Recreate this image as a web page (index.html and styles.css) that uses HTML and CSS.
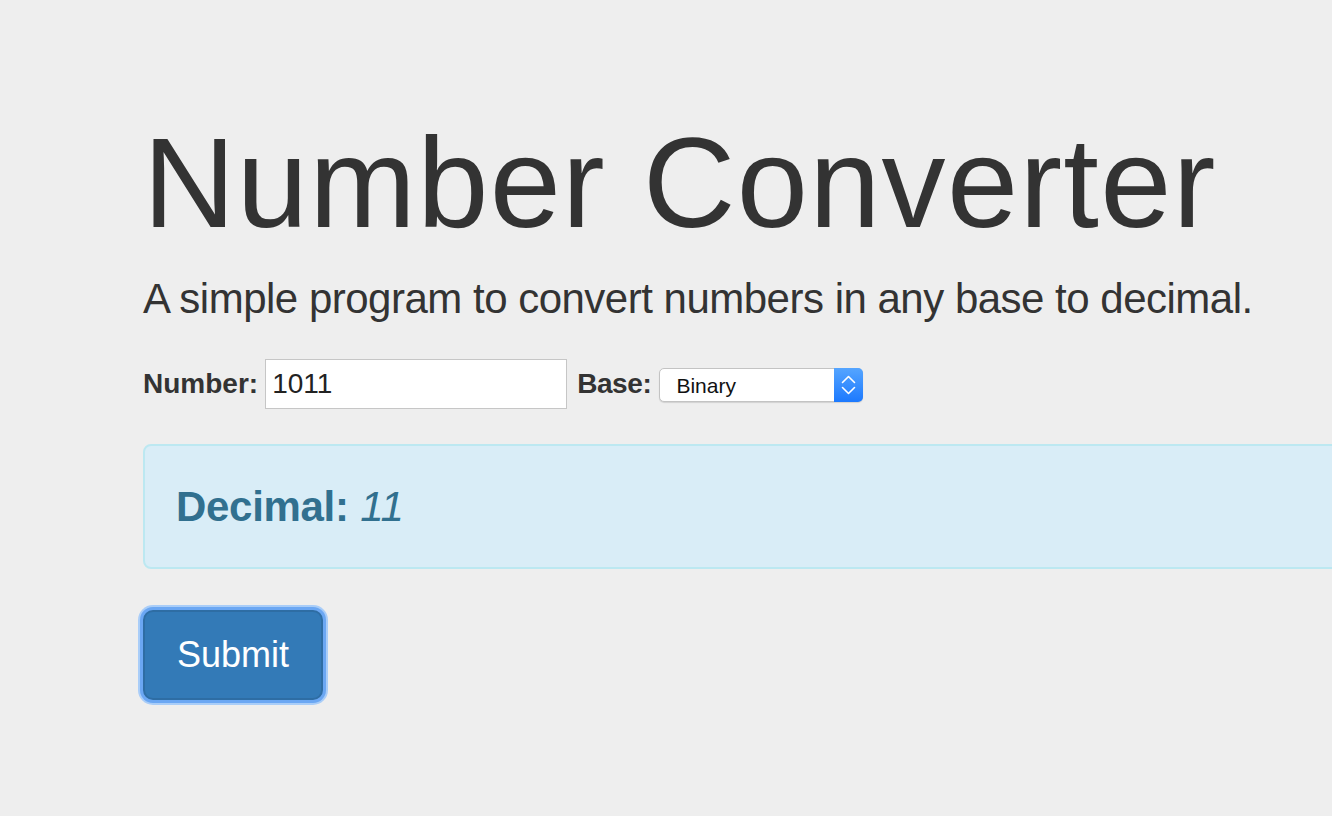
FILE: index.html
```html
<!DOCTYPE html>
<html lang="en">
<head>
<meta charset="utf-8">
<title>Number Converter</title>
<link rel="stylesheet" href="styles.css">
</head>
<body>
<div class="jumbotron">
  <h1 class="title">Number Converter</h1>
  <p class="lead">A simple program to convert numbers in any base to decimal.</p>
  <form class="form-inline">
    <label class="lbl" for="num">Number:</label>
    <input class="num-input" id="num" type="text" value="1011">
    <label class="lbl base-lbl" for="base">Base:</label>
    <div class="select-wrap">
      <select id="base" class="select">
        <option>Binary</option>
        <option>Octal</option>
        <option>Hexadecimal</option>
      </select>
      <span class="select-arrows">
        <svg width="15" height="20" viewBox="0 0 15 20">
          <path d="M1.5 7.5 L7.5 1.5 L13.5 7.5" fill="none" stroke="#fff" stroke-width="1.6" stroke-linecap="round" stroke-linejoin="round"/>
          <path d="M1.5 12.5 L7.5 18.5 L13.5 12.5" fill="none" stroke="#fff" stroke-width="1.6" stroke-linecap="round" stroke-linejoin="round"/>
        </svg>
      </span>
    </div>
  </form>
  <div class="alert">
    <h3 class="result"><strong>Decimal:</strong> <em class="value">11</em></h3>
  </div>
  <button class="btn" type="button">Submit</button>
</div>
</body>
</html>
```
FILE: styles.css
```css
html, body {
  margin: 0;
  padding: 0;
  background: #eeeeee;
  overflow: hidden;
}
body {
  width: 1332px;
  height: 816px;
  font-family: "Liberation Sans", Arial, sans-serif;
  color: #333333;
}
.jumbotron {
  padding: 114px 0 0 143px;
}
.title {
  margin: 0;
  font-size: 128px;
  line-height: 138px;
  font-weight: normal;
  letter-spacing: 1.3px;
  color: #333333;
}
.lead {
  margin: 17px 0 0 0;
  font-size: 42px;
  line-height: 60px;
  letter-spacing: -0.5px;
  color: #333333;
}
.form-inline {
  margin-top: 30px;
  height: 50px;
  display: flex;
  align-items: center;
}
.lbl {
  font-size: 28px;
  font-weight: bold;
  line-height: 50px;
  margin-right: 7px;
}
.base-lbl {
  margin-left: 10px;
  margin-right: 8px;
  letter-spacing: -0.4px;
}
.num-input {
  box-sizing: border-box;
  width: 302px;
  height: 50px;
  margin: 0;
  padding: 0 6px;
  border: 1px solid #c6c6c6;
  background: #ffffff;
  font-family: "Liberation Sans", Arial, sans-serif;
  font-size: 28px;
  color: #222222;
  outline: none;
}
.select-wrap {
  position: relative;
  width: 204px;
  height: 34px;
  margin-top: 2px;
}
.select {
  -webkit-appearance: none;
  appearance: none;
  box-sizing: border-box;
  width: 204px;
  height: 34px;
  margin: 0;
  padding: 0 0 0 16px;
  border: 1px solid #c3c3c3;
  border-radius: 5px;
  background: #ffffff;
  box-shadow: 0 1px 1px rgba(0,0,0,0.12);
  font-family: "Liberation Sans", Arial, sans-serif;
  font-size: 21px;
  color: #111111;
  outline: none;
}
.select-arrows {
  position: absolute;
  right: 0;
  top: 0;
  width: 29px;
  height: 34px;
  border-radius: 0 5px 5px 0;
  background: linear-gradient(#55a5ff, #1c79fe);
  display: flex;
  align-items: center;
  justify-content: center;
}
.alert {
  box-sizing: border-box;
  margin-top: 35px;
  width: 1260px;
  height: 125px;
  padding: 37px 30px 0 31px;
  border: 2px solid #bce8f1;
  border-radius: 8px;
  background: #d9edf7;
  color: #31708f;
}
.result {
  margin: 0;
  font-size: 42px;
  line-height: 48px;
  font-weight: normal;
  color: #31708f;
}
.result strong {
  font-weight: bold;
  letter-spacing: -0.3px;
}
.value {
  font-style: italic;
  font-weight: normal;
}
.btn {
  margin-top: 41px;
  box-sizing: border-box;
  height: 90px;
  padding: 0 32px;
  border: 2px solid #2e6da4;
  border-radius: 10px;
  background: #337ab7;
  color: #ffffff;
  font-family: "Liberation Sans", Arial, sans-serif;
  font-size: 36px;
  line-height: 48px;
  box-shadow: 0 0 0 3px #6ba7f3, 0 0 0 5px #a9cdf8;
  cursor: pointer;
}
```
